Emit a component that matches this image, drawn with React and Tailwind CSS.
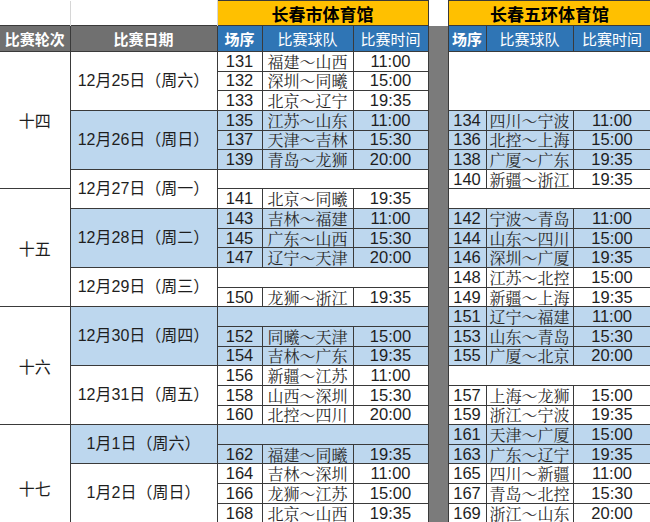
const left = [
  ["131", "福建～山西", "11:00"],
  ["132", "深圳～同曦", "15:00"],
  ["133", "北京～辽宁", "19:35"],
  ["135", "江苏～山东", "11:00"],
  ["137", "天津～吉林", "15:30"],
  ["139", "青岛～龙狮", "20:00"],
  null,
  ["141", "北京～同曦", "19:35"],
  ["143", "吉林～福建", "11:00"],
  ["145", "广东～山西", "15:30"],
  ["147", "辽宁～天津", "20:00"],
  null,
  ["150", "龙狮～浙江", "19:35"],
  null,
  ["152", "同曦～天津", "15:00"],
  ["154", "吉林～广东", "19:35"],
  ["156", "新疆～江苏", "11:00"],
  ["158", "山西～深圳", "15:30"],
  ["160", "北控～四川", "20:00"],
  null,
  ["162", "福建～同曦", "19:35"],
  ["164", "吉林～深圳", "11:00"],
  ["166", "龙狮～江苏", "15:00"],
  ["168", "北京～山西", "19:35"],
];

const right = [
  "big",
  "skip",
  "skip",
  ["134", "四川～宁波", "11:00"],
  ["136", "北控～上海", "15:00"],
  ["138", "广厦～广东", "19:35"],
  ["140", "新疆～浙江", "19:35"],
  null,
  ["142", "宁波～青岛", "11:00"],
  ["144", "山东～四川", "15:00"],
  ["146", "深圳～广厦", "19:35"],
  ["148", "江苏～北控", "15:00"],
  ["149", "新疆～上海", "19:35"],
  ["151", "辽宁～福建", "11:00"],
  ["153", "山东～青岛", "15:30"],
  ["155", "广厦～北京", "20:00"],
  null,
  ["157", "上海～龙狮", "15:00"],
  ["159", "浙江～宁波", "19:35"],
  ["161", "天津～广厦", "15:00"],
  ["163", "广东～辽宁", "19:35"],
  ["165", "四川～新疆", "11:00"],
  ["167", "青岛～北控", "15:30"],
  ["169", "浙江～山东", "20:00"],
];

const dates = {
  0: ["12月25日（周六）", 3],
  3: ["12月26日（周日）", 3],
  6: ["12月27日（周一）", 2],
  8: ["12月28日（周二）", 3],
  11: ["12月29日（周三）", 2],
  13: ["12月30日（周四）", 3],
  16: ["12月31日（周五）", 3],
  19: ["1月1日（周六）", 2],
  21: ["1月2日（周日）", 3],
};

const rounds = {
  0: ["十四", 7, ""],
  7: ["十五", 6, ""],
  13: ["十六", 6, ""],
  19: ["十七", 5, "pt-[28px]"],
};

const blueRows = [3, 4, 5, 8, 9, 10, 13, 14, 15, 19, 20];

const bd = "border border-[#3a3a3a]";
const team = "font-['Noto_Serif_CJK_SC','Noto_Sans_CJK_SC',serif] text-[#2a2a2a] text-[16px] leading-[17px]";

function Game({ game, bg }) {
  if (!game) return <td colSpan={3} className={`${bd} ${bg}`} />;
  return (
    <>
      <td className={`${bd} ${bg} text-center text-[16.5px] leading-[17px]`}>{game[0]}</td>
      <td className={`${bd} ${bg} text-center ${team}`}>{game[1]}</td>
      <td className={`${bd} ${bg} text-center text-[16.5px] leading-[17px]`}>{game[2]}</td>
    </>
  );
}

export default function App() {
  return (
    <div className="w-[650px] h-[522px] overflow-hidden bg-white font-['Liberation_Sans','Noto_Sans_CJK_SC',sans-serif] text-[#1e1e1e] leading-none">
      <table className="border-collapse table-fixed w-[651px]">
        <colgroup>
          <col className="w-[70px]" />
          <col className="w-[147px]" />
          <col className="w-[45px]" />
          <col className="w-[91px]" />
          <col className="w-[75px]" />
          <col className="w-[20px]" />
          <col className="w-[38px]" />
          <col className="w-[87px]" />
          <col className="w-[78px]" />
        </colgroup>
        <tbody>
          <tr className="h-[25px]">
            <td className="border-r border-[#d6d6d6]" />
            <td className="border-r border-[#d6d6d6]" />
            <td colSpan={3} className={`${bd} bg-[#ffc000] text-center font-bold text-[17px] font-['Noto_Sans_CJK_SC',sans-serif] text-black`}>
              长春市体育馆
            </td>
            <td />
            <td colSpan={3} className={`${bd} bg-[#ffc000] text-center font-bold text-[17px] font-['Noto_Sans_CJK_SC',sans-serif] text-black`}>
              长春五环体育馆
            </td>
          </tr>
          <tr className="h-[26px] text-[15px] text-white font-['Noto_Sans_CJK_SC',sans-serif]">
            <td className={`${bd} border-l-0 bg-[#707070] text-center font-bold`}>比赛轮次</td>
            <td className={`${bd} bg-[#707070] text-center font-bold`}>比赛日期</td>
            <td className={`${bd} bg-[#2f75b5] text-center font-bold`}>场序</td>
            <td className={`${bd} bg-[#2f75b5] text-center`}>比赛球队</td>
            <td className={`${bd} bg-[#2f75b5] text-center`}>比赛时间</td>
            <td rowSpan={25} className="bg-[#7b7b7b]" />
            <td className={`${bd} bg-[#2f75b5] text-center font-bold`}>场序</td>
            <td className={`${bd} bg-[#2f75b5] text-center`}>比赛球队</td>
            <td className={`${bd} bg-[#2f75b5] text-center`}>比赛时间</td>
          </tr>
          {left.map((g, i) => {
            const bg = blueRows.includes(i) ? "bg-[#bdd7ee]" : "bg-white";
            const r = right[i];
            return (
              <tr key={i} className="h-[19.65px]">
                {rounds[i] && (
                  <td
                    rowSpan={rounds[i][1]}
                    className={`border-b border-r border-[#3a3a3a] text-center text-[16px] font-['Noto_Sans_CJK_SC',sans-serif] ${rounds[i][2]}`}
                  >
                    {rounds[i][0]}
                  </td>
                )}
                {dates[i] && (
                  <td
                    rowSpan={dates[i][1]}
                    className={`${bd} ${bg} text-center text-[16px] font-['Liberation_Sans','Noto_Sans_CJK_SC',sans-serif]`}
                  >
                    {dates[i][0]}
                  </td>
                )}
                <Game game={g} bg={bg} />
                {r === "big" && <td rowSpan={3} colSpan={3} className={`${bd} bg-white`} />}
                {r !== "big" && r !== "skip" && <Game game={r} bg={bg} />}
              </tr>
            );
          })}
        </tbody>
      </table>
    </div>
  );
}
